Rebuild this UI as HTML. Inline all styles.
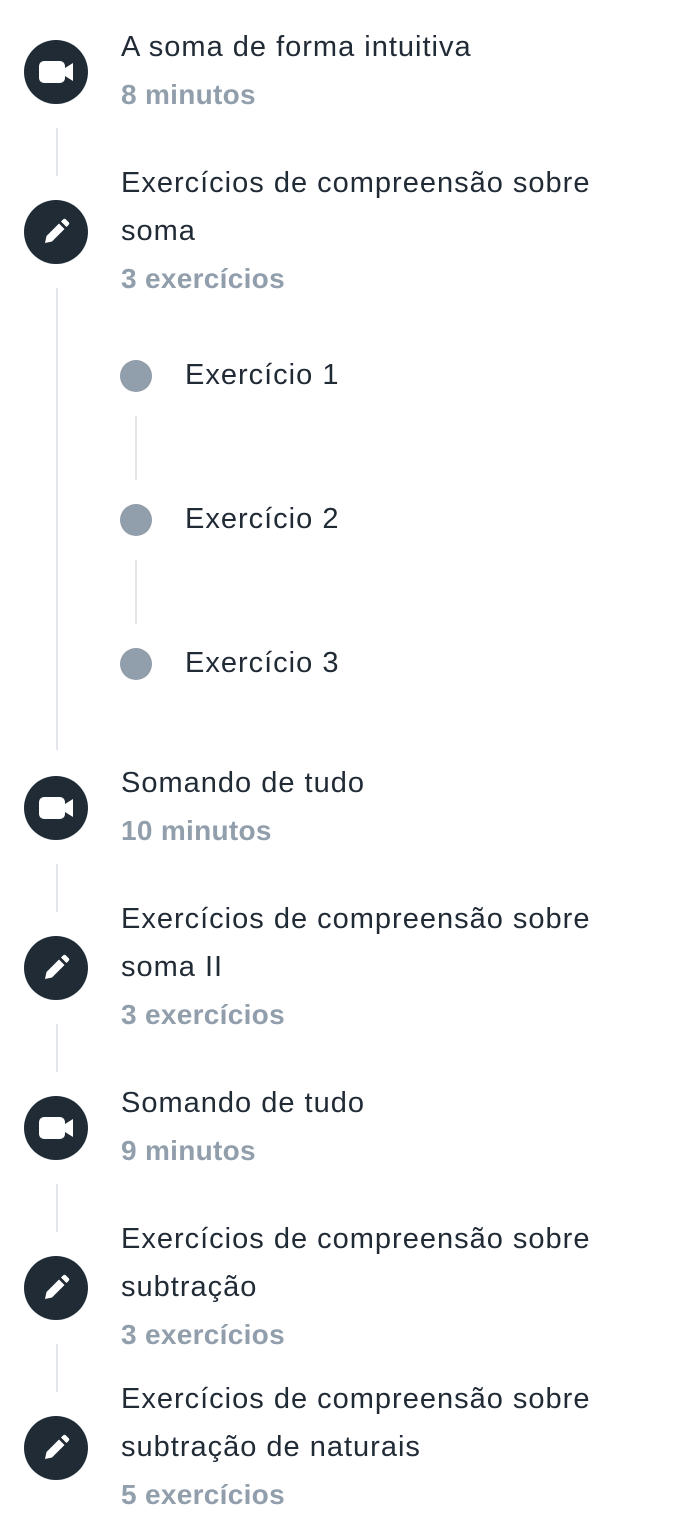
<!DOCTYPE html>
<html><head><meta charset="utf-8"><style>
html,body{margin:0;padding:0;background:#fff;width:686px;height:1536px;overflow:hidden;position:relative;font-family:"Liberation Sans",Roboto,sans-serif}
.c{position:absolute;left:24px;width:64px;height:64px;border-radius:50%;background:#212b36}
.c svg{position:absolute;left:14px;top:14px}
.l{position:absolute;width:2px;background:#e3e6ea}
.t{position:absolute;left:121px;font-size:29px;letter-spacing:1px;line-height:48px;height:48px;color:#212b36;white-space:nowrap}
.s{color:#919eab;font-weight:bold;font-size:28px;letter-spacing:0.3px}
.d{position:absolute;left:120px;width:32px;height:32px;border-radius:50%;background:#919eab}
.e{left:185px}
</style></head><body>
<div class="l" style="left:56px;top:128px;height:48px"></div>
<div class="l" style="left:56px;top:288px;height:462px"></div>
<div class="l" style="left:135px;top:416px;height:64px"></div>
<div class="l" style="left:135px;top:560px;height:64px"></div>
<div class="l" style="left:56px;top:864px;height:48px"></div>
<div class="l" style="left:56px;top:1024px;height:48px"></div>
<div class="l" style="left:56px;top:1184px;height:48px"></div>
<div class="l" style="left:56px;top:1344px;height:48px"></div>

<div class="c" style="top:40px"><svg width="36" height="36" viewBox="0 0 36 36"><rect x="1" y="7" width="26" height="22" rx="5" fill="#fff"/><path d="M27 14 L35 9 V27 L27 22 Z" fill="#fff"/></svg></div>
<div class="c" style="top:200px"><svg width="36" height="36" viewBox="0 0 36 36"><path d="M7 29 L8.5 22 L21 9.5 L26.5 15 L14 27.5 Z M23 7.5 L25 5.5 Q26.5 4 28 5.5 L30.5 8 Q32 9.5 30.5 11 L28.5 13 Z" fill="#fff"/></svg></div>
<div class="c" style="top:776px"><svg width="36" height="36" viewBox="0 0 36 36"><rect x="1" y="7" width="26" height="22" rx="5" fill="#fff"/><path d="M27 14 L35 9 V27 L27 22 Z" fill="#fff"/></svg></div>
<div class="c" style="top:936px"><svg width="36" height="36" viewBox="0 0 36 36"><path d="M7 29 L8.5 22 L21 9.5 L26.5 15 L14 27.5 Z M23 7.5 L25 5.5 Q26.5 4 28 5.5 L30.5 8 Q32 9.5 30.5 11 L28.5 13 Z" fill="#fff"/></svg></div>
<div class="c" style="top:1096px"><svg width="36" height="36" viewBox="0 0 36 36"><rect x="1" y="7" width="26" height="22" rx="5" fill="#fff"/><path d="M27 14 L35 9 V27 L27 22 Z" fill="#fff"/></svg></div>
<div class="c" style="top:1256px"><svg width="36" height="36" viewBox="0 0 36 36"><path d="M7 29 L8.5 22 L21 9.5 L26.5 15 L14 27.5 Z M23 7.5 L25 5.5 Q26.5 4 28 5.5 L30.5 8 Q32 9.5 30.5 11 L28.5 13 Z" fill="#fff"/></svg></div>
<div class="c" style="top:1416px"><svg width="36" height="36" viewBox="0 0 36 36"><path d="M7 29 L8.5 22 L21 9.5 L26.5 15 L14 27.5 Z M23 7.5 L25 5.5 Q26.5 4 28 5.5 L30.5 8 Q32 9.5 30.5 11 L28.5 13 Z" fill="#fff"/></svg></div>

<div class="d" style="top:360px"></div>
<div class="d" style="top:504px"></div>
<div class="d" style="top:648px"></div>

<div class="t" style="top:23px">A soma de forma intuitiva</div>
<div class="t s" style="top:71px">8 minutos</div>

<div class="t" style="top:159px">Exercícios de compreensão sobre</div>
<div class="t" style="top:207px">soma</div>
<div class="t s" style="top:255px">3 exercícios</div>

<div class="t e" style="top:351px">Exercício 1</div>
<div class="t e" style="top:495px">Exercício 2</div>
<div class="t e" style="top:639px">Exercício 3</div>

<div class="t" style="top:759px">Somando de tudo</div>
<div class="t s" style="top:807px">10 minutos</div>

<div class="t" style="top:895px">Exercícios de compreensão sobre</div>
<div class="t" style="top:943px">soma II</div>
<div class="t s" style="top:991px">3 exercícios</div>

<div class="t" style="top:1079px">Somando de tudo</div>
<div class="t s" style="top:1127px">9 minutos</div>

<div class="t" style="top:1215px">Exercícios de compreensão sobre</div>
<div class="t" style="top:1263px">subtração</div>
<div class="t s" style="top:1311px">3 exercícios</div>

<div class="t" style="top:1375px">Exercícios de compreensão sobre</div>
<div class="t" style="top:1423px">subtração de naturais</div>
<div class="t s" style="top:1471px">5 exercícios</div>
</body></html>
